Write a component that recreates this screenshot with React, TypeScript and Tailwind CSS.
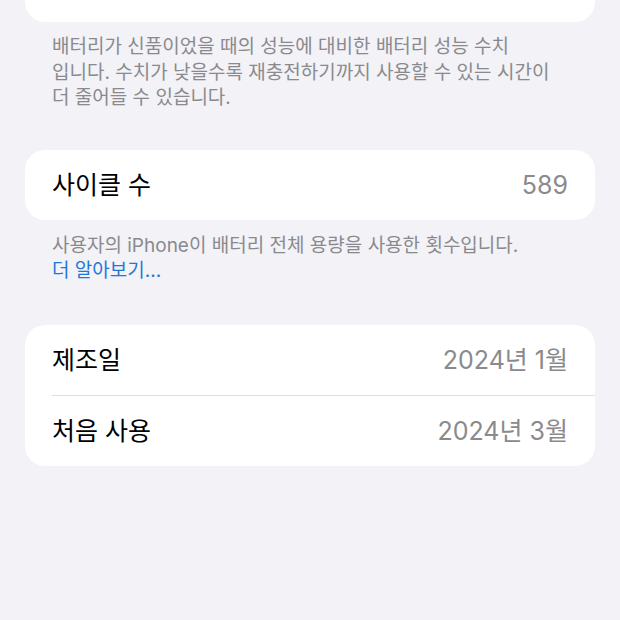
import React from "react";

const font = { fontFamily: '"Inter", "Noto Sans CJK KR", sans-serif' };

function Row({ label, value }: { label: string; value: string }) {
  return (
    <div className="flex h-[70px] items-center justify-between px-[27px] pt-[2px]">
      <span className="text-[25px] text-black">{label}</span>
      <span className="text-[25px] text-[#8a8a8e]">{value}</span>
    </div>
  );
}

export default function App() {
  return (
    <div className="min-h-[620px] w-full overflow-hidden bg-[#f2f2f7]" style={font}>
      <div className="mx-[25px] -mt-[48px] rounded-[20px] bg-white">
        <div className="flex h-[70px] items-center px-[27px]">
          <span className="text-[25px] text-black">최대 용량</span>
        </div>
      </div>
      <p className="mx-[52px] mt-[12px] text-[19px] leading-[25.5px] text-[#8a8a8e]">
        배터리가 신품이었을 때의 성능에 대비한 배터리 성능 수치
        <br />
        입니다. 수치가 낮을수록 재충전하기까지 사용할 수 있는 시간이
        <br />
        더 줄어들 수 있습니다.
      </p>
      <div className="mx-[25px] mt-[39px] rounded-[20px] bg-white">
        <Row label="사이클 수" value="589" />
      </div>
      <p className="mx-[52px] mt-[13px] text-[19px] leading-[25.5px] text-[#8a8a8e]">
        사용자의 iPhone이 배터리 전체 용량을 사용한 횟수입니다.
        <br />
        <span className="text-[#1f78d8]">더 알아보기...</span>
      </p>
      <div className="mx-[25px] mt-[41px] overflow-hidden rounded-[20px] bg-white">
        <Row label="제조일" value="2024년 1월" />
        <div className="ml-[27px] h-px bg-[#dedee2]" />
        <Row label="처음 사용" value="2024년 3월" />
      </div>
    </div>
  );
}
